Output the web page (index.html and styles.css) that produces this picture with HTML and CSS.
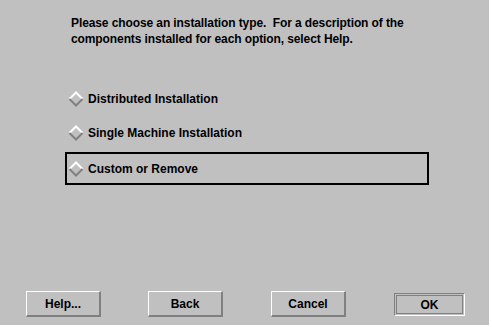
FILE: index.html
```html
<!DOCTYPE html>
<html>
<head>
<meta charset="utf-8">
<link rel="stylesheet" href="styles.css">
</head>
<body>
<div class="panel">
  <p class="intro">Please choose an installation type.&nbsp; For a description of the<br>components installed for each option, select Help.</p>
  <div class="options">
    <div class="opt">
      <svg class="dia" width="16" height="16" viewBox="0 0 16 16"><polygon points="8,1 15,8 8,15 1,8" fill="#c0c0c0"/><polyline points="1.5,8 8,1.5 14.5,8" fill="none" stroke="#ffffff" stroke-width="2"/><polyline points="1.5,8 8,14.5 14.5,8" fill="none" stroke="#808080" stroke-width="2"/></svg>
      <span>Distributed Installation</span>
    </div>
    <div class="opt">
      <svg class="dia" width="16" height="16" viewBox="0 0 16 16"><polygon points="8,1 15,8 8,15 1,8" fill="#c0c0c0"/><polyline points="1.5,8 8,1.5 14.5,8" fill="none" stroke="#ffffff" stroke-width="2"/><polyline points="1.5,8 8,14.5 14.5,8" fill="none" stroke="#808080" stroke-width="2"/></svg>
      <span>Single Machine Installation</span>
    </div>
    <div class="opt sel">
      <svg class="dia" width="16" height="16" viewBox="0 0 16 16"><polygon points="8,1 15,8 8,15 1,8" fill="#c0c0c0"/><polyline points="1.5,8 8,1.5 14.5,8" fill="none" stroke="#ffffff" stroke-width="2"/><polyline points="1.5,8 8,14.5 14.5,8" fill="none" stroke="#808080" stroke-width="2"/></svg>
      <span>Custom or Remove</span>
    </div>
  </div>
  <div class="buttons">
    <div class="btn">Help...</div>
    <div class="btn">Back</div>
    <div class="btn">Cancel</div>
    <div class="okring"><div class="btn ok">OK</div></div>
  </div>
</div>
</body>
</html>
```
FILE: styles.css
```css
html, body { margin: 0; padding: 0; background: #ffffff; }
body { width: 492px; height: 327px; overflow: hidden; }
.panel {
  width: 489px; height: 325px; background: #c0c0c0;
  font-family: "Liberation Sans", Arial, sans-serif; font-weight: bold; font-size: 12px; color: #000;
  display: flex; flex-direction: column; box-sizing: border-box;
}
.intro { margin: 0; padding: 15px 0 0 71px; line-height: 16px; letter-spacing: -0.1px; }
.options { display: flex; flex-direction: column; margin: 35px 0 0 65px; width: 364px; gap: 1px; }
.options .opt:last-child { margin-top: 2px; }
.opt {
  height: 33px; box-sizing: border-box; border: 2px solid transparent;
  display: flex; align-items: center; padding-left: 1px; gap: 4px;
}
.opt.sel { border-color: #000; }
.dia { display: block; flex: none; }
.buttons { display: flex; align-items: flex-start; margin: 106px 0 0 26px; }
.btn {
  width: 75px; height: 26px; box-sizing: border-box;
  border-top: 1px solid #ffffff; border-left: 1px solid #ffffff;
  border-right: 2px solid #808080; border-bottom: 2px solid #808080;
  display: flex; align-items: center; justify-content: center;
  margin-right: 47px;
}
.btn:nth-child(2) { margin-right: 48px; }
.btn:nth-child(3) { margin-right: 48px; }
.okring {
  margin-top: 2px; width: 71px; height: 23px; box-sizing: border-box;
  border-top: 1px solid #808080; border-left: 1px solid #808080;
  border-right: 1px solid #ffffff; border-bottom: 1px solid #ffffff;
  padding: 1px;
}
.btn.ok {
  width: 100%; height: 100%; margin: 0;
  border: 1px solid #808080;
}
```
